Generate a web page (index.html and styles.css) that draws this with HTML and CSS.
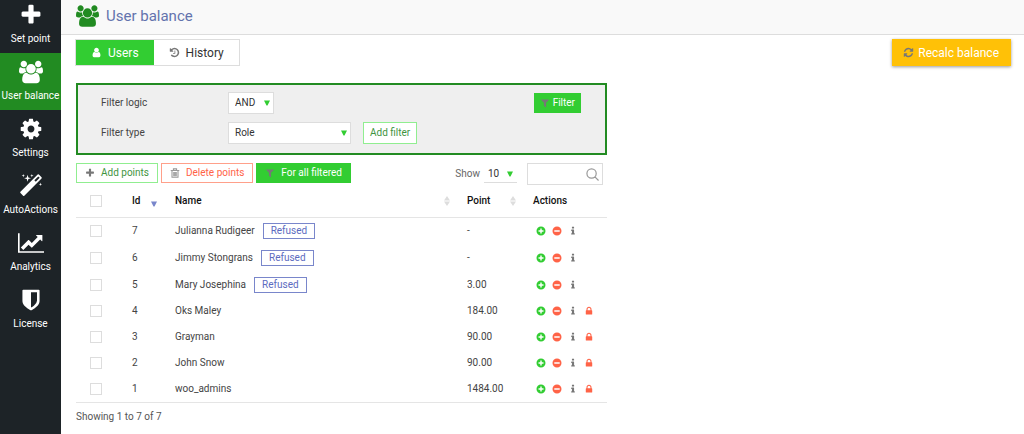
FILE: index.html
```html
<!DOCTYPE html>
<html lang="en">
<head>
<meta charset="utf-8">
<meta name="viewport" content="width=device-width, initial-scale=1">
<title>User balance</title>
<link rel="stylesheet" href="styles.css">
</head>
<body>
<svg class="sprite" aria-hidden="true">
  <symbol id="plus" viewBox="0 0 1792 1792"><path d="M1600 736v192q0 40-28 68t-68 28h-416v416q0 40-28 68t-68 28h-192q-40 0-68-28t-28-68v-416h-416q-40 0-68-28t-28-68v-192q0-40 28-68t68-28h416v-416q0-40 28-68t68-28h192q40 0 68 28t28 68v416h416q40 0 68 28t28 68z"/></symbol>
  <symbol id="users" viewBox="0 0 1920 1792"><path d="M593 896q-162 5-265 128h-134q-82 0-138-40.500t-56-118.500q0-353 124-353 6 0 43.500 21t97.500 42.500 119 21.500q67 0 133-23-5 37-5 66 0 139 81 256zM1664 1533q0 120-73 189.500t-194 69.500h-874q-121 0-194-69.500t-73-189.500q0-53 3.500-103.500t14-109 26.500-108.500 43-97.500 62-81 85.500-53.500 111.500-20q10 0 43 21.500t73 48 107 48 135 21.500 135-21.500 107-48 73-48 43-21.500q61 0 111.500 20t85.500 53.500 62 81 43 97.500 26.500 108.500 14 109 3.500 103.500zM640 256q0 106-75 181t-181 75-181-75-75-181 75-181 181-75 181 75 75 181zM1344 640q0 159-112.500 271.500t-271.500 112.500-271.500-112.500-112.500-271.500 112.500-271.500 271.500-112.500 271.500 112.500 112.500 271.500zM1920 865q0 78-56 118.500t-138 40.500h-134q-103-123-265-128 81-117 81-256 0-29-5-66 66 23 133 23 59 0 119-21.500t97.500-42.500 43.500-21q124 0 124 353zM1792 256q0 106-75 181t-181 75-181-75-75-181 75-181 181-75 181 75 75 181z"/></symbol>
  <symbol id="cog" viewBox="0 0 1792 1792"><path d="M1152 896q0-106-75-181t-181-75-181 75-75 181 75 181 181 75 181-75 75-181zm512-109v222q0 12-8 23t-20 13l-185 28q-19 54-39 91 35 50 107 138 10 12 10 25t-9 23q-27 37-99 108t-94 71q-12 0-26-9l-138-108q-44 23-91 38-16 136-29 186-7 28-36 28h-222q-14 0-24.500-8.500t-11.500-21.500l-28-184q-49-16-90-37l-141 107q-10 9-25 9-14 0-25-11-126-114-165-168-7-10-7-23 0-12 8-23 15-21 51-66.500t54-70.500q-27-50-41-99l-183-27q-13-2-21-12.500t-8-23.500v-222q0-12 8-23t19-13l186-28q14-46 39-92-40-57-107-138-10-12-10-24 0-10 9-23 26-36 98.500-107.500t94.500-71.500q13 0 26 10l138 107q44-23 91-38 16-136 29-186 7-28 36-28h222q14 0 24.500 8.500t11.500 21.500l28 184q49 16 90 37l142-107q9-9 24-9 13 0 25 10 129 119 165 170 7 8 7 22 0 12-8 23-15 21-51 66.500t-54 70.500q26 50 41 98l183 28q13 2 21 12.500t8 23.500z"/></symbol>
  <symbol id="magic" viewBox="0 0 1792 1792"><path d="M1254 581l293-293-107-107-293 293zm447-293q0 27-18 45l-1286 1286q-18 18-45 18t-45-18l-198-198q-18-18-18-45t18-45l1286-1286q18-18 45-18t45 18l198 198q18 18 18 45zm-1351-190l98 30-98 30-30 98-30-98-98-30 98-30 30-98zm350 162l196 60-196 60-60 196-60-196-196-60 196-60 60-196zm930 478l98 30-98 30-30 98-30-98-98-30 98-30 30-98zm-640-640l98 30-98 30-30 98-30-98-98-30 98-30 30-98z"/></symbol>
  <symbol id="chart" viewBox="0 0 2048 1792"><path d="M2048 1536v128h-2048v-1536h128v1408h1920zM1920 288v435q0 21-19.500 29.500t-35.500-7.500l-121-121-633 633q-10 10-23 10t-23-10l-233-233-416 416-192-192 585-585q10-10 23-10t23 10l233 233 464-464-121-121q-16-16-7.500-35.500t29.500-19.500h435q14 0 23 9t9 23z"/></symbol>
  <symbol id="shield" viewBox="0 0 1792 1792"><path d="M1344 960v-640h-448v1137q119-63 213-137 235-184 235-360zm192-768v768q0 86-33.500 170.500t-83 150-118 127.500-126.500 103-121 77.500-89.500 49.500-42.500 20q-12 6-26 6t-26-6q-16-7-42.500-20t-89.500-49.500-121-77.500-126.500-103-118-127.500-83-150-33.500-170.500v-768q0-26 19-45t45-19h1152q26 0 45 19t19 45z"/></symbol>
  <symbol id="user" viewBox="0 0 1792 1792"><path d="M1536 1399q0 109-62.500 187t-150.500 78h-854q-88 0-150.500-78t-62.500-187q0-85 8.500-160.500t31.500-152 58.500-131 94-89 134.500-34.500q131 128 313 128t313-128q76 0 134.500 34.500t94 89 58.500 131 31.500 152 8.500 160.500zm-256-887q0 159-112.500 271.500t-271.500 112.500-271.500-112.500-112.500-271.500 112.500-271.500 271.500-112.500 271.500 112.500 112.500 271.500z"/></symbol>
  <symbol id="history" viewBox="0 0 1792 1792"><path d="M1664 896q0 156-61 298t-164 245-245 164-298 61q-172 0-327-72.500t-264-204.500q-7-10-6.500-22.500t8.500-20.500l137-138q10-9 25-9 16 2 23 12 73 95 179 147t225 52q104 0 198.500-40.500t163.500-109.500 109.500-163.500 40.500-198.500-40.500-198.500-109.500-163.500-163.500-109.500-198.500-40.500q-98 0-188 35.500t-160 101.500l137 138q31 30 14 69-17 40-59 40h-448q-26 0-45-19t-19-45v-448q0-42 40-59 39-17 69 14l130 129q107-101 244.500-156.500t284.500-55.500q156 0 298 61t245 164 164 245 61 298zm-640-288v448q0 14-9 23t-23 9h-320q-14 0-23-9t-9-23v-64q0-14 9-23t23-9h224v-352q0-14 9-23t23-9h64q14 0 23 9t9 23z"/></symbol>
  <symbol id="filter" viewBox="0 0 1792 1792"><path d="M1595 295q17 41-14 70l-493 493v742q0 42-39 59-13 5-25 5-27 0-45-19l-256-256q-19-19-19-45v-486l-493-493q-31-29-14-70 17-39 59-39h1280q42 0 59 39z"/></symbol>
  <symbol id="refresh" viewBox="0 0 1792 1792"><path d="M1639 1056q0 5-1 7-64 268-268 434.500t-478 166.500q-146 0-282.500-55t-243.500-157l-129 129q-19 19-45 19t-45-19-19-45v-448q0-26 19-45t45-19h448q26 0 45 19t19 45-19 45l-137 137q71 66 161 102t187 36q134 0 250-65t186-179q11-17 53-117 8-23 30-23h192q13 0 22.500 9.500t9.500 22.500zm25-800v448q0 26-19 45t-45 19h-448q-26 0-45-19t-19-45 19-45l138-138q-148-137-349-137-134 0-250 65t-186 179q-11 17-53 117-8 23-30 23h-199q-13 0-22.500-9.500t-9.500-22.500v-7q65-268 270-434.500t480-166.500q146 0 284 55.500t245 156.500l130-129q19-19 45-19t45 19 19 45z"/></symbol>
  <symbol id="lock" viewBox="0 0 1792 1792"><path d="M640 768h512v-192q0-106-75-181t-181-75-181 75-75 181v192zm832 96v576q0 40-28 68t-68 28h-960q-40 0-68-28t-28-68v-576q0-40 28-68t68-28h32v-192q0-184 132-316t316-132 316 132 132 316v192h32q40 0 68 28t28 68z"/></symbol>
  <symbol id="info" viewBox="0 0 1792 1792"><path d="M1216 1344v128q0 26-19 45t-45 19h-512q-26 0-45-19t-19-45v-128q0-26 19-45t45-19h64v-384h-64q-26 0-45-19t-19-45v-128q0-26 19-45t45-19h384q26 0 45 19t19 45v576h64q26 0 45 19t19 45zm-128-1152v192q0 26-19 45t-45 19h-256q-26 0-45-19t-19-45v-192q0-26 19-45t45-19h256q26 0 45 19t19 45z"/></symbol>
  <symbol id="trash" viewBox="0 0 14 14"><path fill="none" stroke="currentColor" stroke-width="1.500" d="M1 3.500h12M4.800 3.200V1.200h4.400v2M2.800 4v9h8.400V4M5.300 5.500v6M7 5.500v6M8.700 5.500v6"/></symbol>
  <symbol id="add" viewBox="0 0 10 10"><path fill-rule="evenodd" d="M5 .500a4.500 4.500 0 1 0 0 9a4.500 4.500 0 0 0 0-9zM4.300 2.500h1.400v1.800h1.800v1.400H5.700v1.800H4.300V5.700H2.500V4.300h1.800z"/></symbol>
  <symbol id="remove" viewBox="0 0 10 10"><path fill-rule="evenodd" d="M5 .500a4.500 4.500 0 1 0 0 9a4.500 4.500 0 0 0 0-9zM2.300 4.300h5.400v1.400H2.300z"/></symbol>
  <symbol id="down" viewBox="0 0 6 6"><path d="M0 .500h6L3.500 5.500h-1z"/></symbol>
  <symbol id="sort" viewBox="0 0 6 12"><path d="M0 5.500L3 1l3 4.500zM0 6.500h6L3 11z"/></symbol>
  <symbol id="search" viewBox="0 0 14 14"><path fill="none" stroke="currentColor" stroke-width="1.300" d="M6 1a5 5 0 1 0 0 10a5 5 0 0 0 0-10zM9.600 9.600L13.500 13.500"/></symbol>
</svg>

<div class="app">
  <nav class="sidebar">
    <a class="nav-item" href="#"><svg class="nav-icon"><use href="#plus"/></svg>Set point</a>
    <a class="nav-item active" href="#"><svg class="nav-icon"><use href="#users"/></svg>User balance</a>
    <a class="nav-item" href="#"><svg class="nav-icon"><use href="#cog"/></svg>Settings</a>
    <a class="nav-item" href="#"><svg class="nav-icon"><use href="#magic"/></svg>AutoActions</a>
    <a class="nav-item" href="#"><svg class="nav-icon wide"><use href="#chart"/></svg>Analytics</a>
    <a class="nav-item" href="#"><svg class="nav-icon"><use href="#shield"/></svg>License</a>
  </nav>

  <div class="page">
    <header class="header">
      <svg class="header-icon"><use href="#users"/></svg>
      <h1 class="title">User balance</h1>
    </header>

    <div class="topbar">
      <div class="tabs">
        <button class="tab selected" type="button"><svg class="tab-icon"><use href="#user"/></svg>Users</button>
        <button class="tab" type="button"><svg class="tab-icon gray"><use href="#history"/></svg>History</button>
      </div>
      <button class="recalc" type="button"><svg class="tab-icon gray"><use href="#refresh"/></svg>Recalc balance</button>
    </div>

    <main class="content">
      <form class="filters">
        <div class="filter-row">
          <label class="filter-label" for="logic">Filter logic</label>
          <span class="select short"><select id="logic"><option>AND</option><option>OR</option></select><svg class="arrow"><use href="#down"/></svg></span>
          <button class="btn solid apply" type="button"><svg class="btn-icon"><use href="#filter"/></svg>Filter</button>
        </div>
        <div class="filter-row">
          <label class="filter-label" for="type">Filter type</label>
          <span class="select long"><select id="type"><option>Role</option></select><svg class="arrow"><use href="#down"/></svg></span>
          <button class="btn add-filter" type="button">Add filter</button>
        </div>
      </form>

      <div class="toolbar">
        <div class="bulk">
          <button class="btn" type="button"><svg class="btn-icon"><use href="#plus"/></svg>Add points</button>
          <button class="btn danger" type="button"><svg class="btn-icon"><use href="#trash"/></svg>Delete points</button>
          <button class="btn solid" type="button"><svg class="btn-icon"><use href="#filter"/></svg>For all filtered</button>
        </div>
        <div class="lookup">
          <label class="show" for="size">Show</label>
          <span class="select line"><select id="size"><option>10</option><option>25</option></select><svg class="arrow"><use href="#down"/></svg></span>
          <span class="search"><input type="search" aria-label="Search"><svg class="search-icon"><use href="#search"/></svg></span>
        </div>
      </div>

      <table class="table">
        <colgroup><col class="c-check"><col class="c-id"><col><col class="c-point"><col class="c-actions"></colgroup>
        <thead>
          <tr>
            <th class="pick"><input type="checkbox" aria-label="Select all"></th>
            <th><span class="sortable">Id<svg class="sorted"><use href="#down"/></svg></span></th>
            <th><span class="sortable">Name<svg class="sort"><use href="#sort"/></svg></span></th>
            <th><span class="sortable">Point<svg class="sort"><use href="#sort"/></svg></span></th>
            <th>Actions</th>
          </tr>
        </thead>
        <tbody>
          <tr class="tall">
            <td class="pick"><input type="checkbox" aria-label="Select Julianna Rudigeer"></td><td>7</td>
            <td>Julianna Rudigeer<span class="badge">Refused</span></td><td>-</td>
            <td><div class="actions"><button type="button" class="act green" aria-label="Add"><svg><use href="#add"/></svg></button><button type="button" class="act red" aria-label="Remove"><svg><use href="#remove"/></svg></button><button type="button" class="act" aria-label="Info"><svg><use href="#info"/></svg></button></div></td>
          </tr>
          <tr class="tall">
            <td class="pick"><input type="checkbox" aria-label="Select Jimmy Stongrans"></td><td>6</td>
            <td>Jimmy Stongrans<span class="badge">Refused</span></td><td>-</td>
            <td><div class="actions"><button type="button" class="act green" aria-label="Add"><svg><use href="#add"/></svg></button><button type="button" class="act red" aria-label="Remove"><svg><use href="#remove"/></svg></button><button type="button" class="act" aria-label="Info"><svg><use href="#info"/></svg></button></div></td>
          </tr>
          <tr class="tall">
            <td class="pick"><input type="checkbox" aria-label="Select Mary Josephina"></td><td>5</td>
            <td>Mary Josephina<span class="badge">Refused</span></td><td>3.00</td>
            <td><div class="actions"><button type="button" class="act green" aria-label="Add"><svg><use href="#add"/></svg></button><button type="button" class="act red" aria-label="Remove"><svg><use href="#remove"/></svg></button><button type="button" class="act" aria-label="Info"><svg><use href="#info"/></svg></button></div></td>
          </tr>
          <tr>
            <td class="pick"><input type="checkbox" aria-label="Select Oks Maley"></td><td>4</td>
            <td>Oks Maley</td><td>184.00</td>
            <td><div class="actions"><button type="button" class="act green" aria-label="Add"><svg><use href="#add"/></svg></button><button type="button" class="act red" aria-label="Remove"><svg><use href="#remove"/></svg></button><button type="button" class="act" aria-label="Info"><svg><use href="#info"/></svg></button><button type="button" class="act red" aria-label="Lock"><svg><use href="#lock"/></svg></button></div></td>
          </tr>
          <tr>
            <td class="pick"><input type="checkbox" aria-label="Select Grayman"></td><td>3</td>
            <td>Grayman</td><td>90.00</td>
            <td><div class="actions"><button type="button" class="act green" aria-label="Add"><svg><use href="#add"/></svg></button><button type="button" class="act red" aria-label="Remove"><svg><use href="#remove"/></svg></button><button type="button" class="act" aria-label="Info"><svg><use href="#info"/></svg></button><button type="button" class="act red" aria-label="Lock"><svg><use href="#lock"/></svg></button></div></td>
          </tr>
          <tr>
            <td class="pick"><input type="checkbox" aria-label="Select John Snow"></td><td>2</td>
            <td>John Snow</td><td>90.00</td>
            <td><div class="actions"><button type="button" class="act green" aria-label="Add"><svg><use href="#add"/></svg></button><button type="button" class="act red" aria-label="Remove"><svg><use href="#remove"/></svg></button><button type="button" class="act" aria-label="Info"><svg><use href="#info"/></svg></button><button type="button" class="act red" aria-label="Lock"><svg><use href="#lock"/></svg></button></div></td>
          </tr>
          <tr>
            <td class="pick"><input type="checkbox" aria-label="Select woo_admins"></td><td>1</td>
            <td>woo_admins</td><td>1484.00</td>
            <td><div class="actions"><button type="button" class="act green" aria-label="Add"><svg><use href="#add"/></svg></button><button type="button" class="act red" aria-label="Remove"><svg><use href="#remove"/></svg></button><button type="button" class="act" aria-label="Info"><svg><use href="#info"/></svg></button><button type="button" class="act red" aria-label="Lock"><svg><use href="#lock"/></svg></button></div></td>
          </tr>
        </tbody>
      </table>
      <p class="summary">Showing 1 to 7 of 7</p>
    </main>
  </div>
</div>
</body>
</html>
```
FILE: styles.css
```css
* { box-sizing: border-box; }

body {
  margin: 0;
  background: #fff;
  color: #444;
  font: 10px/14px Roboto, "Liberation Sans", sans-serif;
}

.sprite { display: none; }
svg { display: block; flex: none; fill: currentColor; }

button, select, input {
  margin: 0;
  font: inherit;
  color: inherit;
  border-radius: 0;
}
button { cursor: pointer; white-space: nowrap; }

.app { display: flex; min-height: 100vh; }

/* Sidebar */
.sidebar {
  display: flex;
  flex: none;
  flex-direction: column;
  width: 61px;
  background: #1d2327;
}
.nav-item {
  display: flex;
  flex-direction: column;
  align-items: center;
  gap: 5px;
  height: 57px;
  padding-top: 7px;
  color: #fff;
  text-decoration: none;
  white-space: nowrap;
}
.nav-item:first-child { height: 53px; padding-top: 3px; }
.nav-item.active { background: #228b22; }
.nav-icon { width: 24px; height: 24px; }
.nav-icon.wide { width: 26px; }

/* Header */
.page { flex: 1; min-width: 0; }
.header {
  display: flex;
  align-items: center;
  gap: 7px;
  height: 35px;
  padding: 0 15px 3px;
  background: #f9f9f9;
  border-bottom: 1px solid #ddd;
}
.header-icon { width: 23px; height: 22px; color: #228b22; }
.title { margin: 0; font-size: 15px; font-weight: 400; line-height: 20px; color: #6373ad; }

/* Tabs */
.topbar {
  display: flex;
  justify-content: space-between;
  align-items: flex-start;
  padding: 4px 13px 0 14px;
}
.tabs { display: flex; border: 1px solid #ddd; }
.tab, .recalc {
  display: flex;
  align-items: center;
  justify-content: center;
  border: 0;
  font-size: 12px;
  line-height: 16px;
}
.tab { gap: 6px; height: 25px; padding: 0 15px; background: #fff; color: #333; }
.tab.selected { background: #32cd32; color: #fff; }
.tab-icon { width: 11px; height: 11px; }
.gray { color: #777; }
.recalc {
  gap: 4px;
  height: 27px;
  padding: 0 12px 0 11px;
  background: #ffc107;
  color: #fff;
  box-shadow: 0 1px 3px rgba(0, 0, 0, .4);
}

/* Filters */
.content { width: 100%; max-width: 561px; padding: 17px 15px; }
.filters {
  display: flex;
  flex-direction: column;
  gap: 8px;
  padding: 7px 24px 9px 23px;
  background: #efefef;
  border: 2px solid #228b22;
}
.filter-row { display: flex; align-items: center; }
.filter-label { width: 127px; }

.select { display: grid; align-items: center; color: #333; }
.select select, .select .arrow { grid-area: 1 / 1; }
.select select {
  width: 100%;
  height: 22px;
  padding: 0 6px;
  border: 1px solid #ddd;
  background: #fff;
  appearance: none;
}
.arrow {
  justify-self: end;
  width: 6px;
  height: 6px;
  margin-right: 4px;
  color: #32cd32;
  pointer-events: none;
}
.short { width: 46px; }
.long { width: 123px; }
.line { width: 33px; }
.line select { height: 18px; padding: 0 4px; border-width: 0 0 1px; }

.btn {
  display: flex;
  align-items: center;
  gap: 6px;
  height: 20px;
  padding: 0 8px;
  border: 1px solid #90ee90;
  background: #fff;
  color: #3f943f;
}
.btn-icon { width: 10px; height: 10px; color: #777; }
.solid { border-color: #32cd32; background: #32cd32; color: #fff; }
.danger { border-color: #ffa08a; color: #ff6347; }
.danger .btn-icon { color: #999; }
.apply { gap: 3px; margin-left: auto; padding: 0 5px; }
.add-filter { height: 22px; margin-left: 12px; padding: 0 6px; }

/* Toolbar */
.toolbar {
  display: flex;
  align-items: flex-start;
  justify-content: space-between;
  padding: 8px 4px 0 0;
}
.bulk, .lookup { display: flex; }
.bulk { gap: 3px; }
.lookup { align-items: center; gap: 4px; }
.show { color: #666; }
.search { display: grid; align-items: center; width: 76px; margin-left: 6px; }
.search input, .search-icon { grid-area: 1 / 1; }
.search input { width: 100%; height: 22px; padding: 0 20px 0 4px; border: 1px solid #ddd; appearance: none; }
.search-icon { justify-self: end; width: 13px; height: 13px; margin-right: 4px; color: #999; pointer-events: none; }

/* Table */
.table { width: 100%; table-layout: fixed; border-collapse: collapse; border-bottom: 1px solid #e5e5e5; }
.c-check { width: 56px; }
.c-id { width: 43px; }
.c-point { width: 66px; }
.c-actions { width: 74px; }
.table th, .table td { height: 26px; padding: 0; text-align: left; vertical-align: middle; }
.table th { height: 32px; border-bottom: 1px solid #e5e5e5; color: #111; font-weight: 500; }
.table .tall td { height: 27px; }
.table .pick { padding-left: 14px; }
.pick input { display: block; width: 12px; height: 12px; border: 1px solid #ddd; background: #fff; appearance: none; }
.sortable { display: flex; align-items: center; justify-content: space-between; }
.sorted { width: 6px; height: 6px; margin: 6px 18px 0 0; color: #7986cb; }
.sort { width: 6px; height: 12px; margin-right: 17px; color: #ddd; }

.badge {
  display: inline-block;
  margin-left: 8px;
  padding: 0 7px;
  border: 1px solid #7986cb;
  color: #5c6bc0;
}
.actions { display: flex; gap: 6px; padding-left: 3px; }
.act { padding: 0; border: 0; background: none; color: #777; }
.act svg { width: 10px; height: 10px; }
.act.green { color: #32cd32; }
.act.red { color: #ff6347; }

.summary { margin: 7px 0 0; color: #555; }
```
